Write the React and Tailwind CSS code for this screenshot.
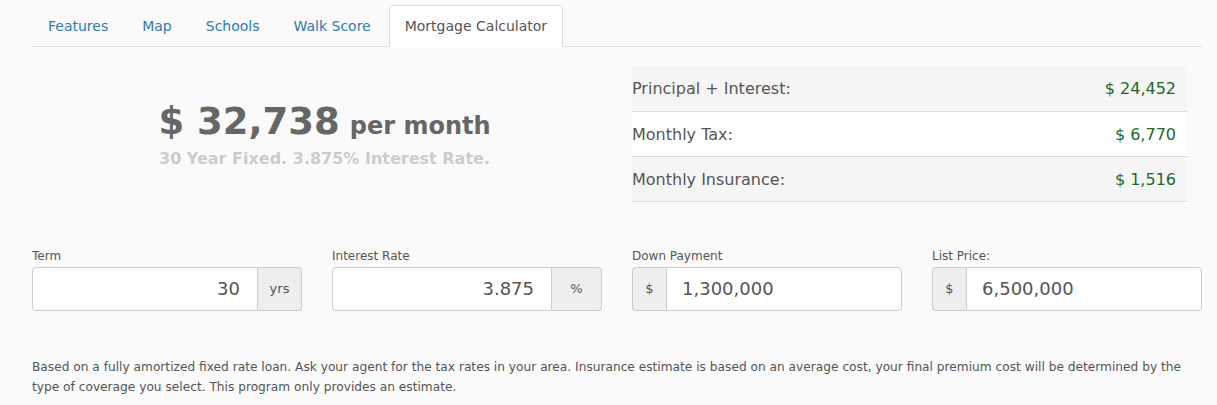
import { useState } from 'react'

const tabs = ['Features', 'Map', 'Schools', 'Walk Score', 'Mortgage Calculator']

const breakdown = [
  { label: 'Principal + Interest:', value: '$ 24,452', striped: true },
  { label: 'Monthly Tax:', value: '$ 6,770', striped: false },
  { label: 'Monthly Insurance:', value: '$ 1,516', striped: true },
]

function Field({ label, value, onChange, addon, addonLeft, alignRight, addonWidth }) {
  return (
    <div>
      <label className="block text-[12px] leading-[15px] text-[#555] mb-[3px]">{label}</label>
      <div className="flex h-[44px]">
        {addonLeft && (
          <span
            className={`flex items-center justify-center ${addonWidth} bg-[#eee] border border-[#ccc] border-r-0 rounded-l-[4px] text-[13px] text-[#555]`}
          >
            {addon}
          </span>
        )}
        <input
          value={value}
          onChange={(e) => onChange(e.target.value)}
          className={`flex-1 min-w-0 bg-white border border-[#ccc] text-[18px] text-[#555] outline-none ${
            alignRight ? 'text-right pr-[17px] rounded-l-[4px]' : 'pl-[15px] rounded-r-[4px]'
          }`}
        />
        {!addonLeft && (
          <span
            className={`flex items-center justify-center ${addonWidth} bg-[#eee] border border-[#ccc] border-l-0 rounded-r-[4px] text-[13px] text-[#555]`}
          >
            {addon}
          </span>
        )}
      </div>
    </div>
  )
}

export default function App() {
  const [active, setActive] = useState('Mortgage Calculator')
  const [term, setTerm] = useState('30')
  const [rate, setRate] = useState('3.875')
  const [down, setDown] = useState('1,300,000')
  const [price, setPrice] = useState('6,500,000')

  return (
    <div className="min-h-[405px] bg-[#fafafa] font-['DejaVu_Sans',Verdana,sans-serif]">
      <div className="w-[1170px] ml-[32px]">
        {/* tabs */}
        <ul className="flex pt-[5px] border-b border-[#ddd]">
          {tabs.map((t) => (
            <li key={t} className="mr-[2px] -mb-px">
              <button
                onClick={() => setActive(t)}
                className={`block px-[15px] h-[42px] text-[14px] rounded-t-[4px] border ${
                  active === t
                    ? 'bg-white border-[#ddd] border-b-white text-[#555]'
                    : 'border-transparent text-[#2a7ab8]'
                }`}
              >
                {t}
              </button>
            </li>
          ))}
        </ul>

        {/* summary */}
        <div className="grid grid-cols-2 mt-[19px]">
          <div className="px-[15px] flex flex-col items-center pt-[35px]">
            <div className="font-bold text-[#666] leading-[42px] whitespace-nowrap">
              <span className="text-[37px]">$ 32,738</span>
              <span className="text-[24px] ml-[10px]">per month</span>
            </div>
            <div className="font-bold text-[#ccc] text-[16px] leading-[18px] whitespace-nowrap">
              30 Year Fixed. 3.875% Interest Rate.
            </div>
          </div>
          <div className="px-[15px]">
            <table className="w-full border-collapse">
              <tbody>
                {breakdown.map((r) => (
                  <tr
                    key={r.label}
                    className={`h-[45px] border-b border-[#ddd] ${r.striped ? 'bg-[#f5f5f5]' : 'bg-white'}`}
                  >
                    <td className="text-[16px] text-[#555] pl-0 pt-[2px]">{r.label}</td>
                    <td className="text-[16px] text-[#1c6a1c] text-right pr-[11px] pt-[2px]">{r.value}</td>
                  </tr>
                ))}
              </tbody>
            </table>
          </div>
        </div>

        {/* inputs */}
        <div className="grid grid-cols-4 gap-[30px] mt-[47px]">
          <Field label="Term" value={term} onChange={setTerm} addon="yrs" alignRight addonWidth="w-[44px]" />
          <Field label="Interest Rate" value={rate} onChange={setRate} addon="%" alignRight addonWidth="w-[50px]" />
          <Field label="Down Payment" value={down} onChange={setDown} addon="$" addonLeft addonWidth="w-[34px]" />
          <Field label="List Price:" value={price} onChange={setPrice} addon="$" addonLeft addonWidth="w-[34px]" />
        </div>

        {/* disclaimer */}
        <p className="mt-[46px] text-[12.2px] leading-[20px] text-[#555]">
          Based on a fully amortized fixed rate loan. Ask your agent for the tax rates in your area. Insurance estimate is
          based on an average cost, your final premium cost will be determined by the type of coverage you select. This
          program only provides an estimate.
        </p>
      </div>
    </div>
  )
}
